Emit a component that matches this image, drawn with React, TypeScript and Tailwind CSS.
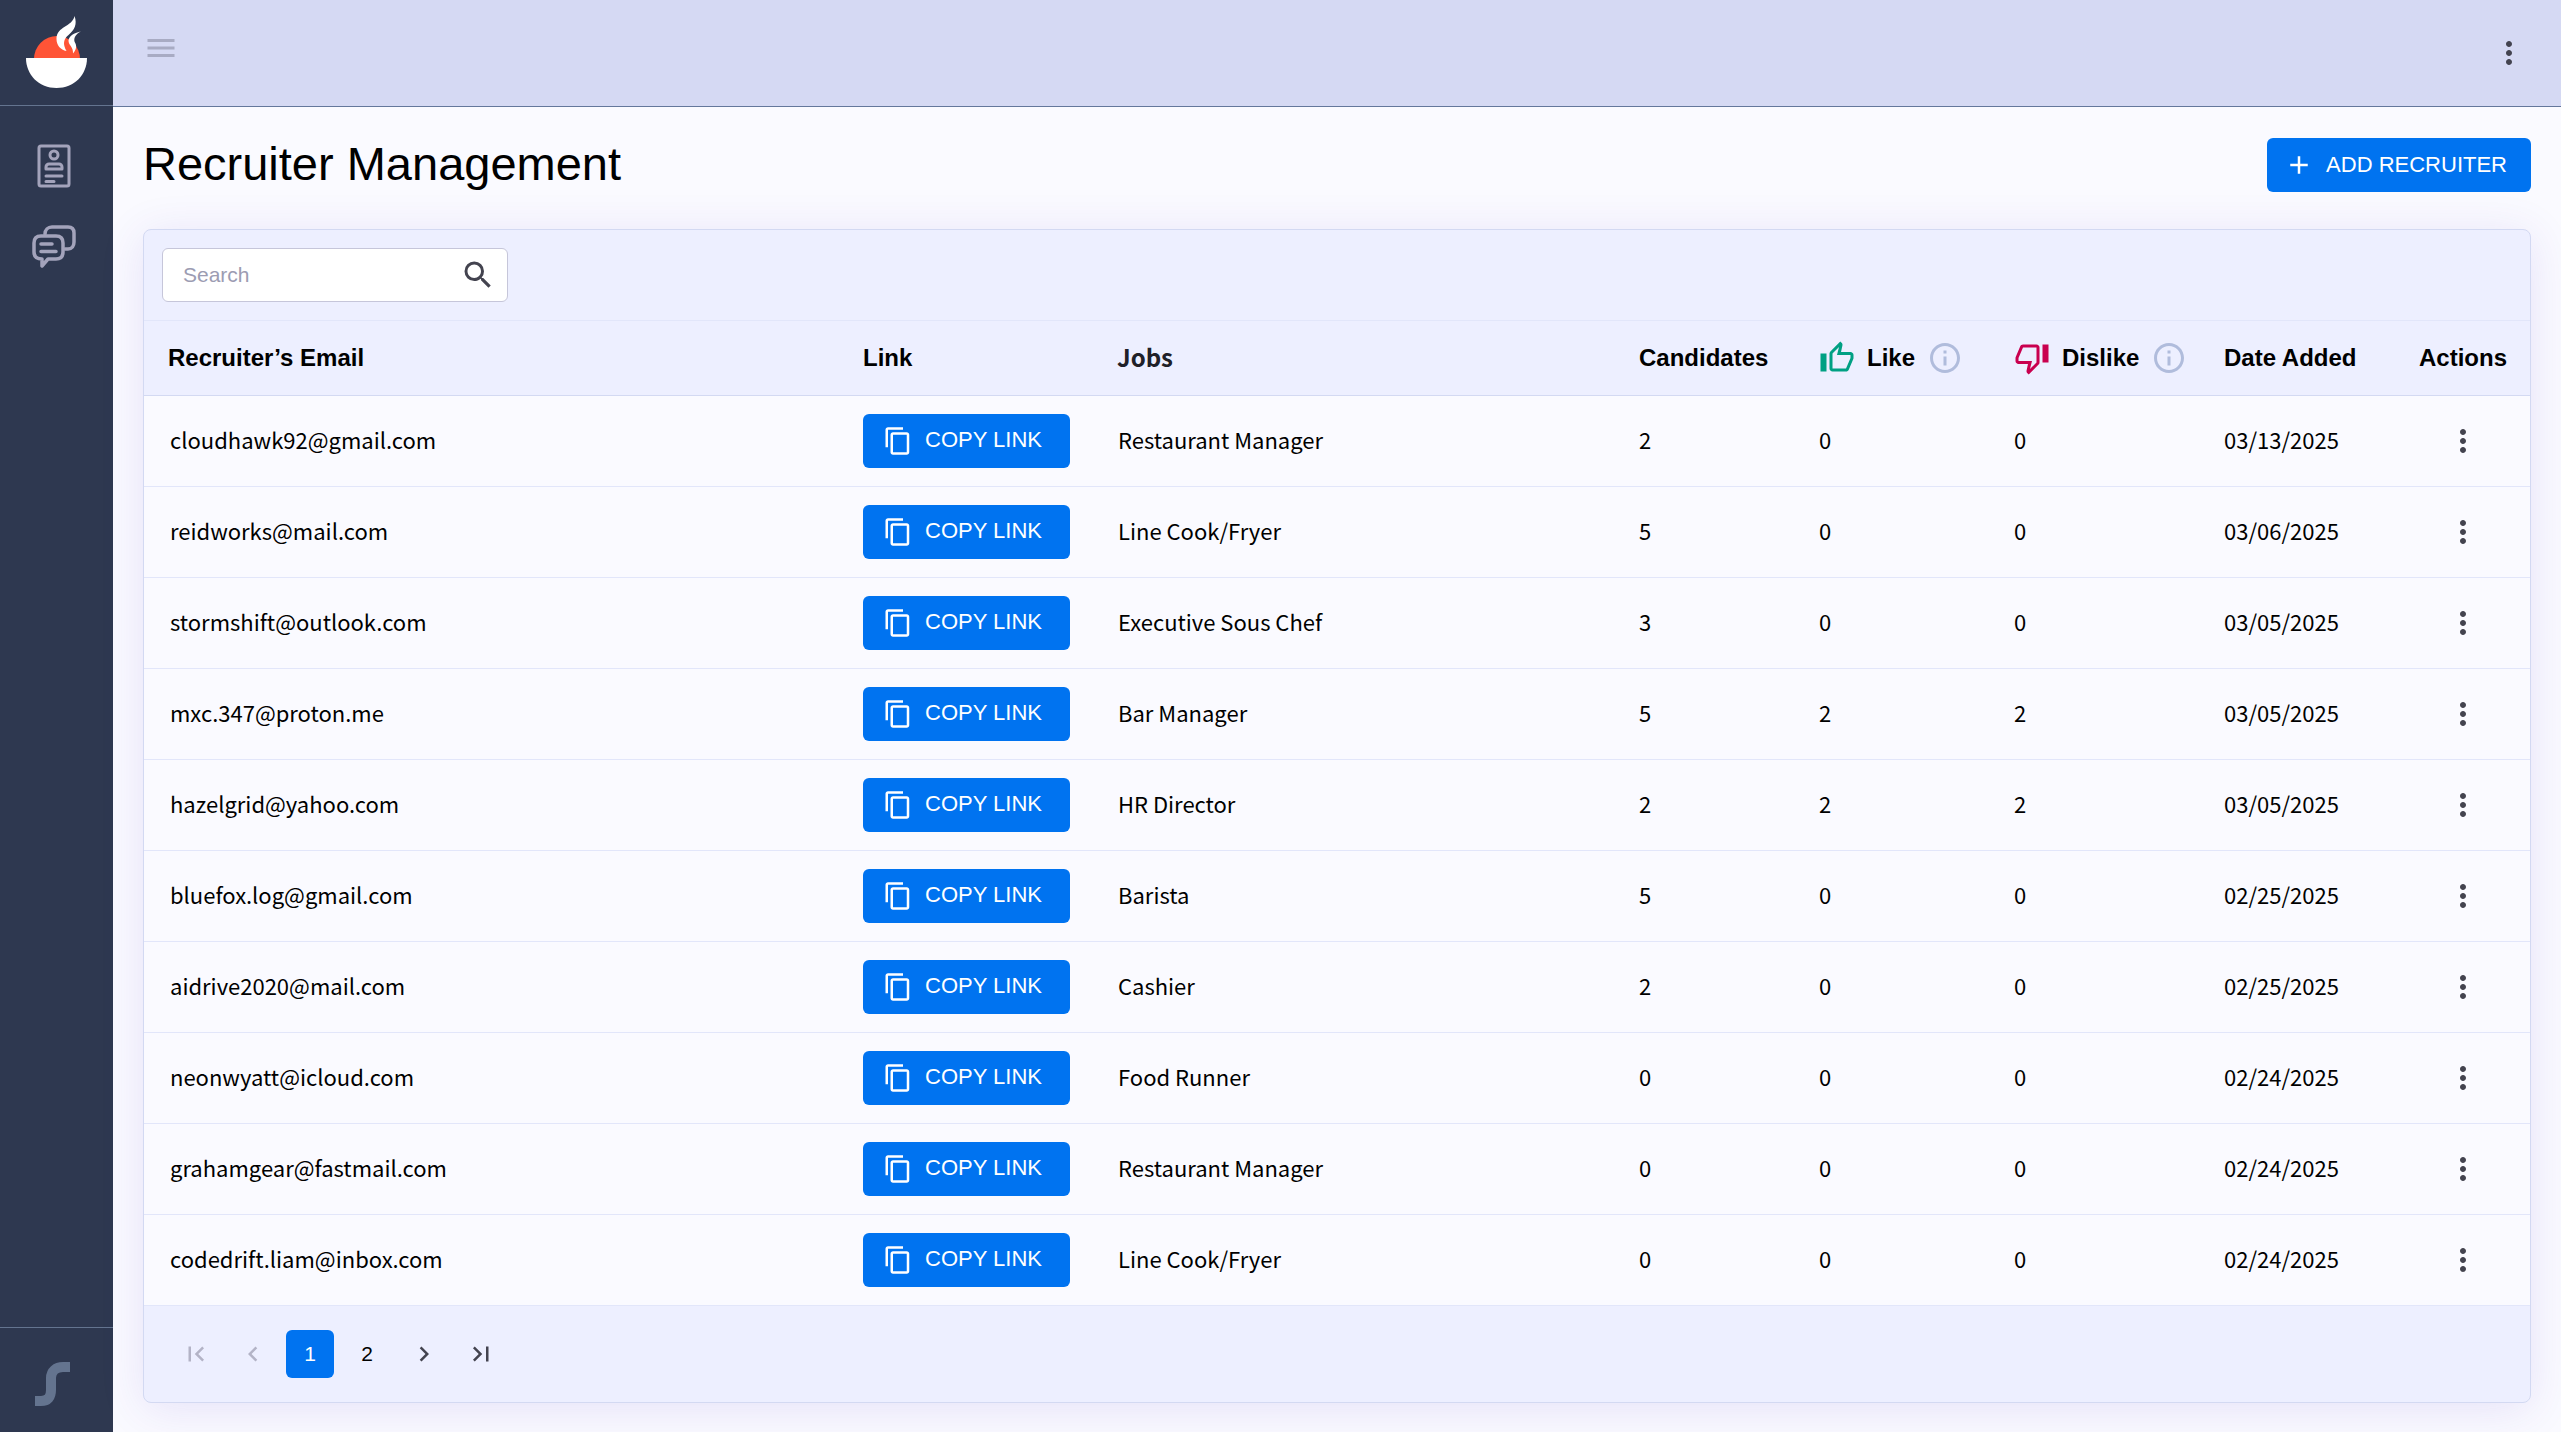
import { MdAdd, MdChevronLeft, MdChevronRight, MdFirstPage, MdLastPage, MdMenu, MdMoreVert, MdOutlineContentCopy, MdOutlineInfo, MdOutlineThumbDown, MdOutlineThumbUp, MdSearch } from "react-icons/md";

interface Recruiter {
    email: string
    job: string
    candidates: number
    likes: number
    dislikes: number
    dateAdded: string
}

const recruiters: Recruiter[] = [
    { email: "cloudhawk92@gmail.com", job: "Restaurant Manager", candidates: 2, likes: 0, dislikes: 0, dateAdded: "03/13/2025" },
    { email: "reidworks@mail.com", job: "Line Cook/Fryer", candidates: 5, likes: 0, dislikes: 0, dateAdded: "03/06/2025" },
    { email: "stormshift@outlook.com", job: "Executive Sous Chef", candidates: 3, likes: 0, dislikes: 0, dateAdded: "03/05/2025" },
    { email: "mxc.347@proton.me", job: "Bar Manager", candidates: 5, likes: 2, dislikes: 2, dateAdded: "03/05/2025" },
    { email: "hazelgrid@yahoo.com", job: "HR Director", candidates: 2, likes: 2, dislikes: 2, dateAdded: "03/05/2025" },
    { email: "bluefox.log@gmail.com", job: "Barista", candidates: 5, likes: 0, dislikes: 0, dateAdded: "02/25/2025" },
    { email: "aidrive2020@mail.com", job: "Cashier", candidates: 2, likes: 0, dislikes: 0, dateAdded: "02/25/2025" },
    { email: "neonwyatt@icloud.com", job: "Food Runner", candidates: 0, likes: 0, dislikes: 0, dateAdded: "02/24/2025" },
    { email: "grahamgear@fastmail.com", job: "Restaurant Manager", candidates: 0, likes: 0, dislikes: 0, dateAdded: "02/24/2025" },
    { email: "codedrift.liam@inbox.com", job: "Line Cook/Fryer", candidates: 0, likes: 0, dislikes: 0, dateAdded: "02/24/2025" },
]

function Logo() {
    return (
        <svg viewBox="0 0 62 74" className="w-[62px] h-[74px]" aria-hidden="true">
            <path d="M8 43a23 23 0 0 1 46 0z" fill="#ff5436" />
            <path d="M48.500 0c3 8 0 14-6 19-5 4-6 9-2 16-6-1-10-6-10-12 0-13 16-12 18-23z" fill="#fff" />
            <path d="M55 15.500c-6 1-12 4-12.500 9 0 5 5 6 4.500 13 5-6 3-9 1.500-12-1-4 2-8 6.500-10z" fill="#fff" />
            <path d="M0 42h61c0 17-13 30-30.500 30S0 59 0 42z" fill="#fff" />
        </svg>
    )
}

function ResumeIcon() {
    return (
        <svg viewBox="0 0 34 44" className="w-[34px] h-[44px]" fill="none" stroke="currentColor" strokeWidth="3" strokeLinecap="round" aria-hidden="true">
            <rect x="2" y="2" width="30" height="40" rx="2" />
            <circle cx="17" cy="11" r="4" />
            <path d="M12 20h10a3 3 0 0 1 3 3v2H9v-2a3 3 0 0 1 3-3z" strokeLinejoin="round" />
            <path d="M9 32h16M9 37.500h8" />
        </svg>
    )
}

function ChatIcon() {
    return (
        <svg viewBox="0 0 44 44" className="w-[44px] h-[44px]" fill="none" stroke="currentColor" strokeWidth="3.500" strokeLinecap="round" strokeLinejoin="round" aria-hidden="true">
            <path d="M13 9c0-4 3-7 7-7h16c4 0 6 2 6 6v9c0 4-2 7-6 7h-3" />
            <path d="M9 11h15c5 0 7 3 7 7v9c0 4-2 7-7 7h-8l-6 7v-7c-6 0-8-3-8-7v-9c0-4 2-7 7-7z" />
            <path d="M9 19h11M9 26.500h15" />
        </svg>
    )
}

function Sidebar() {
    return (
        <aside className="flex flex-col shrink-0 w-[113px] bg-[#2e3850] text-[#a3a3bb]">
            <a href="#home" aria-label="Home" className="flex justify-center h-[106px] pt-4 border-b border-[#64748f]">
                <Logo />
            </a>
            <nav className="flex flex-col flex-1 items-center gap-[37px] pt-[38px] pr-[5px]">
                <a href="#recruiters" aria-label="Recruiters"><ResumeIcon /></a>
                <a href="#messages" aria-label="Messages"><ChatIcon /></a>
            </nav>
            <footer className="h-[105px] pt-[34px] pl-[35px] border-t border-[#64748f]">
                <svg viewBox="0 0 35 44" className="w-[35px] h-[44px]" fill="none" stroke="#64748f" strokeWidth="10" aria-hidden="true">
                    <path d="M35 5h-7c-7 0-12 4-12 11v12c0 7-3 11-10 11H0" />
                </svg>
            </footer>
        </aside>
    )
}

function RecruiterRow({ item }: { item: Recruiter }) {
    return (
        <tr className="h-[91px] border-b border-[#e2e6fa]">
            <td className="pl-[26px] pb-1">{item.email}</td>
            <td className="pl-6">
                <button className="flex items-center gap-3 w-[207px] h-[54px] pl-5 rounded-md bg-[#0073f0] text-white font-['Liberation_Sans',sans-serif] text-[22px]">
                    <MdOutlineContentCopy size={30} />
                    <span className="pb-[2px]">COPY LINK</span>
                </button>
            </td>
            <td className="pl-[25px] pb-1">{item.job}</td>
            <td className="pl-6 pb-1">{item.candidates}</td>
            <td className="pl-6 pb-1">{item.likes}</td>
            <td className="pl-6 pb-1">{item.dislikes}</td>
            <td className="pl-6 pb-1">{item.dateAdded}</td>
            <td>
                <button aria-label="Row actions" className="flex mx-auto text-[#43434f]"><MdMoreVert size={36} /></button>
            </td>
        </tr>
    )
}

function RecruiterTable() {
    return (
        <table className="w-full table-fixed border-collapse text-left">
            <colgroup>
                <col />
                <col className="w-[254px]" />
                <col className="w-[522px]" />
                <col className="w-[180px]" />
                <col className="w-[195px]" />
                <col className="w-[210px]" />
                <col className="w-[196px]" />
                <col className="w-[134px]" />
            </colgroup>
            <thead className="font-['Liberation_Sans',sans-serif] text-2xl">
                <tr className="h-[74px] border-b border-[#d3d9f2]">
                    <th className="pl-6">Recruiter’s Email</th>
                    <th className="pl-6">Link</th>
                    <th className="pl-6 pb-[2px] text-[#202028] font-['Noto_Sans_CJK_SC',sans-serif]">Jobs</th>
                    <th className="pl-6">Candidates</th>
                    <th className="pl-6">
                        <div className="flex items-center gap-3">
                            <MdOutlineThumbUp size={36} className="text-[#00a083]" />
                            Like
                            <MdOutlineInfo size={36} className="text-[#b0bcdc]" />
                        </div>
                    </th>
                    <th className="pl-6">
                        <div className="flex items-center gap-3">
                            <MdOutlineThumbDown size={36} className="text-[#c9004f]" />
                            Dislike
                            <MdOutlineInfo size={36} className="text-[#b0bcdc]" />
                        </div>
                    </th>
                    <th className="pl-6">Date Added</th>
                    <th className="text-center">Actions</th>
                </tr>
            </thead>
            <tbody className="bg-[#fafaff] font-['Noto_Sans_CJK_SC',sans-serif] text-[22px] leading-8">
                {recruiters.map((recruiter) => (
                    <RecruiterRow key={recruiter.email} item={recruiter} />
                ))}
            </tbody>
        </table>
    )
}

function Pagination() {
    const button = "flex items-center justify-center w-12 h-12 rounded-md"

    return (
        <nav aria-label="Pagination" className="flex gap-[9px] px-7 py-6 text-[21px] text-[#43434f]">
            <button disabled aria-label="First page" className={`${button} text-[#b3b3c6]`}><MdFirstPage size={30} /></button>
            <button disabled aria-label="Previous page" className={`${button} text-[#b3b3c6]`}><MdChevronLeft size={30} /></button>
            <button aria-current="page" className={`${button} bg-[#0073f0] text-white`}>1</button>
            <button className={`${button} text-black`}>2</button>
            <button aria-label="Next page" className={button}><MdChevronRight size={30} /></button>
            <button aria-label="Last page" className={button}><MdLastPage size={30} /></button>
        </nav>
    )
}

export default function App() {
    return (
        <div className="flex min-h-screen bg-[#fafaff] text-black font-['Liberation_Sans',sans-serif]">
            <Sidebar />
            <div className="flex flex-col flex-1 min-w-0">
                <header className="flex justify-between items-center h-[107px] pl-[30px] pr-[34px] bg-[#d5d9f3] border-b border-[#64779b]">
                    <button aria-label="Toggle menu" className="pb-[10px] text-[#a8abc3]"><MdMenu size={36} /></button>
                    <button aria-label="More options" className="text-[#43434f]"><MdMoreVert size={36} /></button>
                </header>
                <main className="px-[30px] pt-[31px] pb-[29px]">
                    <div className="flex justify-between items-start h-[91px]">
                        <h1 className="text-[47px] leading-[52px]">Recruiter Management</h1>
                        <button className="flex items-center gap-3 h-[54px] pl-[17px] pr-6 rounded-md bg-[#0073f0] text-white text-[22px]">
                            <MdAdd size={30} />
                            <span className="pb-[2px]">ADD RECRUITER</span>
                        </button>
                    </div>
                    <section className="border border-[#d3d9f2] rounded-lg bg-[#edefff] shadow-[0_6px_45px_rgba(80,50,200,0.12)]">
                        <div className="p-[18px] border-b border-[#e2e6fa]">
                            <label className="flex items-center w-[346px] h-[54px] pl-5 pr-[11px] border border-[#c6c6da] rounded-md bg-white">
                                <input type="search" aria-label="Search" placeholder="Search" className="flex-1 min-w-0 outline-none text-[21px] placeholder:text-[#9c9cb2]" />
                                <MdSearch size={36} className="text-[#43434f]" />
                            </label>
                        </div>
                        <RecruiterTable />
                        <Pagination />
                    </section>
                </main>
            </div>
        </div>
    )
}
